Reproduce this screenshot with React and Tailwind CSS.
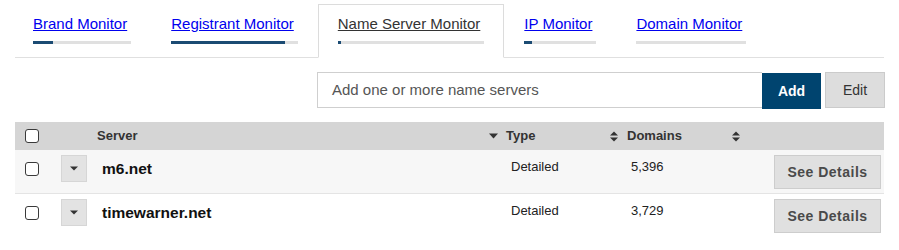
import React from "react";

const tabs = [
  { label: "Brand Monitor", fill: 20 },
  { label: "Registrant Monitor", fill: 90 },
  { label: "Name Server Monitor", fill: 2, active: true },
  { label: "IP Monitor", fill: 10 },
  { label: "Domain Monitor", fill: 0 },
];

const rows = [
  { server: "m6.net", type: "Detailed", domains: "5,396", shaded: true },
  { server: "timewarner.net", type: "Detailed", domains: "3,729" },
];

const SortBoth = () => (
  <svg width="8" height="11" viewBox="0 0 8 11" className="shrink-0">
    <path d="M0 4.5 L4 0.5 L8 4.5 Z" fill="#333" />
    <path d="M0 6.5 L4 10.5 L8 6.5 Z" fill="#333" />
  </svg>
);

const SortDown = () => (
  <svg width="9" height="6" viewBox="0 0 9 6" className="shrink-0">
    <path d="M0 0.5 L9 0.5 L4.5 5.5 Z" fill="#333" />
  </svg>
);

const Checkbox = () => (
  <div className="w-[14px] h-[14px] rounded-[3px] border-[1.5px] border-[#3a3a3a] bg-white" />
);

const App = () => {
  return (
    <div
      className="w-[899px] h-[250px] bg-white overflow-hidden"
      style={{ fontFamily: '"Liberation Sans", Arial, sans-serif' }}
    >
      {/* tabs */}
      <div className="mx-[15px] mt-[4px] border-b border-[#e0e0e0]">
        <div className="flex -ml-[2px]">
          {tabs.map((t) => (
            <div
              key={t.label}
              className={
                t.active
                  ? "px-[19px] pt-[10px] pb-[12px] border border-[#dcdcdc] border-b-white bg-white -mb-px"
                  : "px-[19px] pt-[10px] pb-[12px] border border-transparent"
              }
            >
              <div className="flex flex-col w-fit">
                <span
                  className={
                    t.active
                      ? "text-[15px] leading-[17px] text-[#333] underline pr-[4px]"
                      : "text-[15px] leading-[17px] text-[#0000ee] underline pr-[4px]"
                  }
                >
                  {t.label}
                </span>
                <div className="mt-[9px] h-[3px] w-full bg-[#e0e0e0]">
                  <div className="h-full bg-[#1b4b73]" style={{ width: `${t.fill}%` }} />
                </div>
              </div>
            </div>
          ))}
        </div>
      </div>

      {/* add row */}
      <div className="flex justify-end mx-[14px] mt-[14px]">
        <div className="w-[445px] h-[36px] border border-[#cfcfcf] border-r-0 flex items-center pl-[14px] text-[15px] text-[#555]">
          Add one or more name servers
        </div>
        <button className="w-[59px] h-[36px] mt-[1px] bg-[#00446f] text-white text-[14px] font-bold">
          Add
        </button>
        <button className="ml-[4px] w-[60px] h-[36px] bg-[#dddddd] border border-[#cbcbcb] text-[#333] text-[14px]">
          Edit
        </button>
      </div>

      {/* table */}
      <div className="mx-[15px] mt-[13px]">
        <div className="flex items-center h-[28px] bg-[#d5d5d5] text-[13px] font-bold text-[#333]">
          <div className="w-[82px] pl-[10px]">
            <Checkbox />
          </div>
          <div className="w-[405px] flex items-center justify-between pr-[4px]">
            <span>Server</span>
            <SortDown />
          </div>
          <div className="w-[120px] flex items-center justify-between pl-[4px] pr-[4px]">
            <span>Type</span>
            <SortBoth />
          </div>
          <div className="w-[122px] flex items-center justify-between pl-[5px] pr-[4px]">
            <span>Domains</span>
            <SortBoth />
          </div>
          <div className="flex-1" />
        </div>

        {rows.map((r) => (
          <div
            key={r.server}
            className={
              r.shaded
                ? "flex items-start h-[44px] bg-[#f7f7f7] border-b border-[#e4e4e4]"
                : "flex items-start h-[44px] bg-white"
            }
          >
            <div className="w-[46px] pl-[10px] pt-[12px]">
              <Checkbox />
            </div>
            <div className="w-[41px] pt-[5px]">
              <div className="w-[26px] h-[27px] bg-[#e3e3e3] border border-[#d6d6d6] flex items-center justify-center">
                <svg width="8" height="5" viewBox="0 0 8 5">
                  <path d="M0 0.5 L8 0.5 L4 4.5 Z" fill="#333" />
                </svg>
              </div>
            </div>
            <div className="w-[409px] pt-[10px] text-[15.5px] leading-[18px] font-bold text-[#111]">
              {r.server}
            </div>
            <div className="w-[120px] pt-[9px] text-[13px] leading-[16px] text-[#222]">
              {r.type}
            </div>
            <div className="w-[143px] pt-[9px] text-[13px] leading-[16px] text-[#222]">
              {r.domains}
            </div>
            <div className="pt-[5px]">
              <button className="w-[107px] h-[34px] bg-[#e0e0e0] border border-[#cdcdcd] text-[14px] font-bold tracking-[0.5px] text-[#4a4a4a]">
                See Details
              </button>
            </div>
          </div>
        ))}
      </div>
    </div>
  );
};

export default App;
